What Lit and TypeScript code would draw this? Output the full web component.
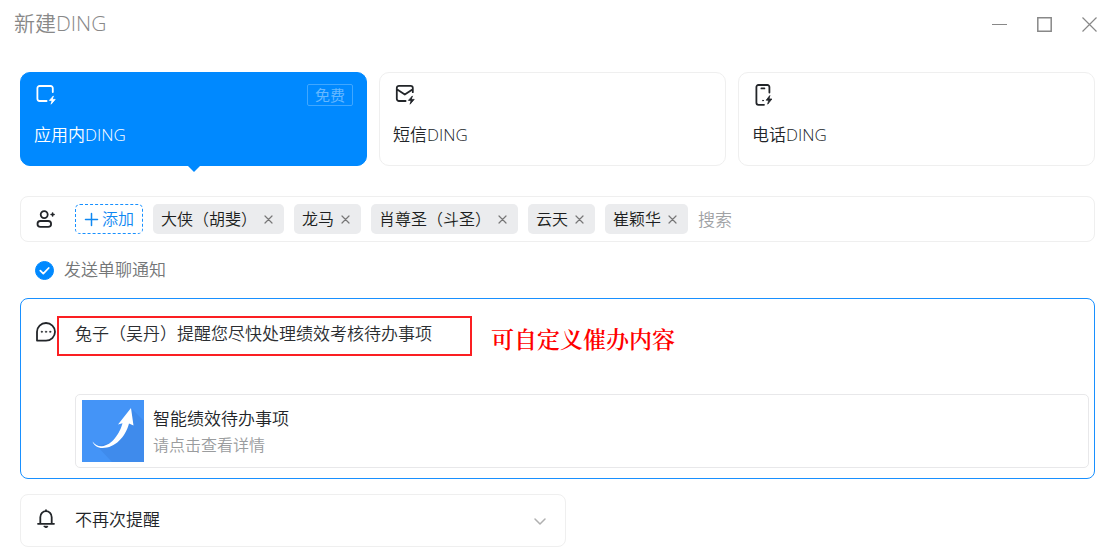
import { LitElement, html, css, svg } from "lit";
import { customElement, state } from "lit/decorators.js";
import { classMap } from "lit/directives/class-map.js";

const bolt = svg`<path class="solid" d="M19.200 13.200 15.400 17.400h2.700l-1 3.800 4.100-4.800h-2.600z" stroke-width="0.8"/>`;

const icons = {
  app: svg`<path d="M18.800 9V5.200A2.200 2.200 0 0 0 16.600 3H5.600A2.200 2.200 0 0 0 3.400 5.200v10.600A2.200 2.200 0 0 0 5.600 18H12.600"/>${bolt}`,
  sms: svg`<path d="M19.800 9.200V5A2.200 2.200 0 0 0 17.600 2.800H6A2.200 2.200 0 0 0 3.800 5v10.800A2.200 2.200 0 0 0 6 18H12.600M4.200 6.600l7.600 5 7.600-5"/>${bolt}`,
  phone: svg`<path d="M17.400 9.600V4A2 2 0 0 0 15.400 2H6.400A2 2 0 0 0 4.400 4v15.800a2 2 0 0 0 2 2H12M9.400 5.400h3"/><circle class="solid" cx="11" cy="17.600" r="0.5" stroke-width="0.8"/><path class="solid" d="M17.600 12.800 14.200 17.200h2.500l-1 4 4.200-5.200h-2.600z" stroke-width="0.8"/>`,
};

type Mode = { id: keyof typeof icons; name: string; tag?: string };

const modes: Mode[] = [
  { id: "app", name: "应用内DING", tag: "免费" },
  { id: "sms", name: "短信DING" },
  { id: "phone", name: "电话DING" },
];

@customElement("app-root")
export class AppRoot extends LitElement {
  @state() private mode = "app";
  @state() private people = ["大侠（胡斐）", "龙马", "肖尊圣（斗圣）", "云天", "崔颖华"];

  static styles = css`
    :host {
      display: block;
      background: #fff;
      color: #222529;
      font-family: "Open Sans", "Noto Sans CJK SC", sans-serif;
      font-size: 17px;
      font-weight: 350;
      line-height: 24px;
    }
    *, *::before, *::after { box-sizing: border-box; }
    button, input, textarea, select {
      margin: 0;
      padding: 0;
      border: 0;
      background: none;
      color: inherit;
      font: inherit;
      outline: none;
    }
    button, select { cursor: pointer; }
    svg {
      display: block;
      flex: none;
      fill: none;
      stroke: currentColor;
      stroke-width: 1.8;
      stroke-linecap: round;
      stroke-linejoin: round;
    }
    .solid { fill: currentColor; }
    .header {
      display: flex;
      align-items: center;
      justify-content: space-between;
      height: 46px;
      padding: 0 8px 0 14px;
      color: #888;
    }
    .title { margin: 0; font-size: 21px; font-weight: 350; line-height: 28px; }
    .controls { display: flex; gap: 28px; padding-top: 2px; }
    .controls svg { stroke-width: 1; stroke-linecap: butt; stroke-linejoin: miter; }
    .main { padding: 26px 11px 12px 20px; }
    .modes {
      display: grid;
      grid-template-columns: 347fr 347fr 357fr;
      gap: 12px;
      margin-bottom: 30px;
    }
    .mode {
      position: relative;
      display: flex;
      flex-direction: column;
      align-items: stretch;
      gap: 16px;
      height: 94px;
      padding: 10px 13px;
      border: 1px solid #efefef;
      border-radius: 10px;
      text-align: left;
    }
    .mode.on { background: #0089ff; border-color: #0089ff; color: #fff; }
    .mode.on::after {
      content: "";
      position: absolute;
      top: 100%;
      left: 50%;
      margin-left: -7px;
      border: 7px solid transparent;
      border-top-color: #0089ff;
      border-bottom-width: 0;
    }
    .top { display: flex; justify-content: space-between; align-items: center; height: 24px; }
    .tag {
      padding: 0 7px;
      border: 1px solid #40a7ff;
      border-radius: 2px;
      color: #66b8ff;
      font-size: 15px;
      line-height: 20px;
      font-weight: 400;
    }
    .people {
      display: flex;
      align-items: center;
      gap: 10px;
      min-height: 46px;
      padding: 0 14px;
      border: 1px solid #efefef;
      border-radius: 8px;
    }
    .lead { display: flex; width: 30px; }
    .add {
      display: flex;
      align-items: center;
      gap: 3px;
      height: 30px;
      padding: 0 8px;
      border: 1px dashed #1890ff;
      border-radius: 5px;
      color: #0f88f2;
      font-size: 16px;
      white-space: nowrap;
    }
    .chip {
      display: flex;
      align-items: center;
      gap: 7px;
      height: 30px;
      padding: 0 11px 0 8px;
      border-radius: 5px;
      background: #ebecee;
      font-size: 16px;
      color: #1c1e20;
      white-space: nowrap;
    }
    .chip button { color: #777; }
    .chip svg { stroke-width: 1.2; }
    .search { flex: 1; min-width: 60px; height: 30px; }
    .search::placeholder { color: #a0a2a5; opacity: 1; }
    .notify {
      display: flex;
      align-items: center;
      height: 56px;
      padding-left: 15px;
      color: #747677;
    }
    .notify label { padding-left: 10px; }
    .tick {
      display: grid;
      width: 19px;
      height: 19px;
    }
    .tick > * { grid-area: 1 / 1; }
    .tick input { appearance: none; width: 19px; height: 19px; border-radius: 50%; border: 1px solid #bbb; }
    .tick input:checked { background: #0089ff; border-color: #0089ff; }
    .tick svg { color: #fff; pointer-events: none; z-index: 1; }
    .message {
      position: relative;
      padding: 17px 5px 10px 14px;
      border: 1px solid #1890ff;
      border-radius: 8px;
      margin-bottom: 15px;
    }
    .compose { display: flex; align-items: flex-start; }
    .compose .lead, .remind .lead { width: 40px; }
    .compose .lead { padding-top: 5px; }
    .compose textarea {
      flex: 1;
      display: block;
      height: 78px;
      padding-top: 6px;
      resize: none;
      color: #2b2e31;
    }
    .frame {
      position: absolute;
      top: 17px;
      left: 36px;
      width: 415px;
      height: 40px;
      border: 2px solid #fb1f22;
      pointer-events: none;
    }
    .note {
      position: absolute;
      top: 24px;
      left: 470px;
      color: #f00;
      font-family: "Noto Serif CJK SC", "Noto Sans CJK SC", serif;
      font-size: 23px;
      font-weight: 600;
      line-height: 32px;
      pointer-events: none;
    }
    .attach {
      display: flex;
      align-items: center;
      gap: 9px;
      margin-left: 40px;
      padding: 5px 6px;
      border: 1px solid #e8e8ea;
      border-radius: 5px;
      color: inherit;
      text-decoration: none;
    }
    .cover { stroke: none; }
    .detail { display: flex; flex-direction: column; gap: 2px; padding-top: 2px; }
    .sub { color: #9a9c9e; font-size: 16px; }
    .remind {
      display: flex;
      align-items: center;
      width: calc(50% + 8px);
      height: 53px;
      padding: 0 18px 0 14px;
      border: 1px solid #efefef;
      border-radius: 8px;
    }
    .remind .lead { padding-bottom: 4px; }
    .remind select { flex: 1; appearance: none; height: 30px; margin-right: -14px; padding-bottom: 2px; }
    .arrow { color: #b0b0b0; pointer-events: none; }
  `;

  private remove(name: string) {
    this.people = this.people.filter((p) => p !== name);
  }

  render() {
    return html`
      <header class="header">
        <h1 class="title">新建DING</h1>
        <div class="controls">
          <button aria-label="最小化"><svg width="17" height="17"><path d="M1 8.5h15"/></svg></button>
          <button aria-label="最大化"><svg width="17" height="17"><path stroke-width="1.5" d="M1.800 1.800h13.400v13.400h-13.400z"/></svg></button>
          <button aria-label="关闭"><svg width="17" height="17"><path stroke-width="1.2" d="M1.500 1.500l14 14M15.500 1.500l-14 14"/></svg></button>
        </div>
      </header>
      <main class="main">
        <div class="modes">
          ${modes.map(
            (m) => html`<button
              class=${classMap({ mode: true, on: m.id === this.mode })}
              aria-pressed=${m.id === this.mode ? "true" : "false"}
              @click=${() => (this.mode = m.id)}
            >
              <span class="top">
                <svg width="24" height="24" viewBox="0 0 24 24">${icons[m.id]}</svg>
                ${m.tag ? html`<span class="tag">${m.tag}</span>` : ""}
              </span>
              <span>${m.name}</span>
            </button>`
          )}
        </div>
        <div class="people">
          <label class="lead" for="search" aria-label="搜索">
            <svg width="21" height="21" viewBox="0 0 21 21"><circle cx="9.200" cy="5.600" r="3.500"/><rect x="2.500" y="12" width="13.600" height="5.800" rx="2.900"/><path stroke-width="1.600" d="M17.600 4v3M16.100 5.500h3"/></svg>
          </label>
          <button class="add">
            <svg width="15" height="15"><path stroke-width="1.500" d="M7.500 1.500v12M1.500 7.500h12"/></svg><span>添加</span>
          </button>
          ${this.people.map(
            (p) => html`<span class="chip"><span>${p}</span><button aria-label="移除${p}" @click=${() => this.remove(p)}><svg width="9" height="9"><path d="M1 1l7 7M8 1l-7 7"/></svg></button></span>`
          )}
          <input class="search" id="search" type="text" placeholder="搜索" />
        </div>
        <div class="notify">
          <span class="tick">
            <input id="notify" type="checkbox" checked />
            <svg width="19" height="19"><path stroke-width="1.800" d="M5.300 9.600l3 3 5.400-5.600"/></svg>
          </span>
          <label for="notify">发送单聊通知</label>
        </div>
        <section class="message">
          <div class="compose">
            <label class="lead" for="text" aria-label="提醒内容">
              <svg width="22" height="22" viewBox="0 0 22 22"><path d="M2 19.600V10.800a9 8.800 0 1 1 9 8.800z"/><g class="solid" stroke-width="0.400"><circle cx="6.800" cy="10.800" r="0.800"/><circle cx="11" cy="10.800" r="0.800"/><circle cx="15.200" cy="10.800" r="0.800"/></g></svg>
            </label>
            <textarea id="text">兔子（吴丹）提醒您尽快处理绩效考核待办事项</textarea>
          </div>
          <span class="frame"></span>
          <span class="note">可自定义催办内容</span>
          <a class="attach" href="#">
            <svg class="cover" width="62" height="62" viewBox="0 0 62 62">
              <rect width="62" height="62" fill="#4494f7"/>
              <path fill="#3f8bec" d="M49 8 62 21V62H30L15 46 33 42z"/>
              <path fill="#fff" d="M49 8 36 24.500l4.500-1.200C38 33 30 45.500 20 46.200 16 46.500 13 44.500 10.500 41.500c1.500 4 5 6.500 10 6.500C33 48 43.500 37 47 23.500l4.500 2z"/>
            </svg>
            <span class="detail"><span>智能绩效待办事项</span><span class="sub">请点击查看详情</span></span>
          </a>
        </section>
        <div class="remind">
          <label class="lead" for="remind" aria-label="再次提醒">
            <svg width="22" height="22" viewBox="0 0 22 22"><path d="M3 15.800h16M5.300 15.600V9.200a5.700 6 0 0 1 11.400 0V15.600M11 2.800v-.6"/><path class="solid" stroke-width="1" d="M9.200 18.300h3.600a1.800 1.200 0 0 1-3.600 0z"/></svg>
          </label>
          <select id="remind"><option>不再次提醒</option></select>
          <svg class="arrow" width="14" height="14"><path stroke-width="1.500" d="M2 5l5 5 5-5"/></svg>
        </div>
      </main>
    `;
  }
}
